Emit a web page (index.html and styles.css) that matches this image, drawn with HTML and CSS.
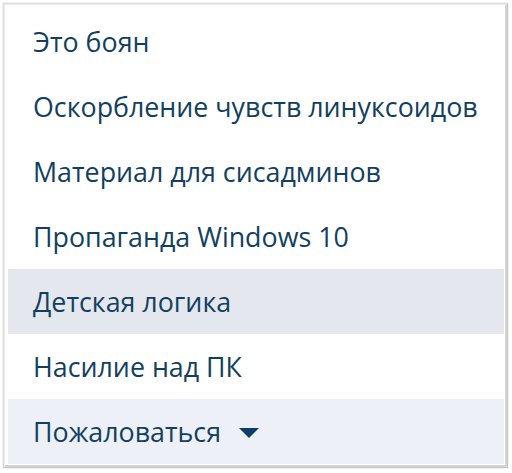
FILE: index.html
```html
<!DOCTYPE html>
<html lang="ru">
<head>
<meta charset="utf-8">
<link rel="stylesheet" href="styles.css">
</head>
<body>
<div class="frame">
  <ul class="menu">
    <li class="item">Это боян</li>
    <li class="item">Оскорбление чувств линуксоидов</li>
    <li class="item">Материал для сисадминов</li>
    <li class="item">Пропаганда Windows 10</li>
    <li class="item item-hover">Детская логика</li>
    <li class="item">Насилие над ПК</li>
    <li class="item item-footer">Пожаловаться
      <svg class="caret" width="20" height="10" viewBox="0 0 20 10"><path d="M0 0 H20 L10 10 Z" fill="#0f3d63"/></svg>
    </li>
  </ul>
</div>
</body>
</html>
```
FILE: styles.css
```css
html, body {
  margin: 0;
  padding: 0;
  background: #ffffff;
}
.frame {
  margin: 3px 4px 3px 3px;
  border: 1px solid #dcdcdc;
  border-right-color: #c8c8c8;
  border-bottom-color: #c8c8c8;
  box-shadow: inset 1px 1px 0 #ececec, inset -2px -2px 0 #d4d4d4, 0 0 0 1px #f2f2f2;
  padding: 5px 3px 3px 4px;
  background: #ffffff;
}
.menu {
  list-style: none;
  margin: 0;
  padding: 0;
}
.item {
  height: 65px;
  display: flex;
  align-items: center;
  padding-left: 25px;
  font-family: "Open Sans", "Noto Sans", sans-serif;
  font-size: 26.8px;
  font-weight: 500;
  color: #123f60;
  box-sizing: border-box;
}
.item-hover {
  background: #e4e8ee;
}
.item-footer {
  background: #edf0f6;
}
.caret {
  margin-left: 18px;
  margin-top: 2px;
}
```
